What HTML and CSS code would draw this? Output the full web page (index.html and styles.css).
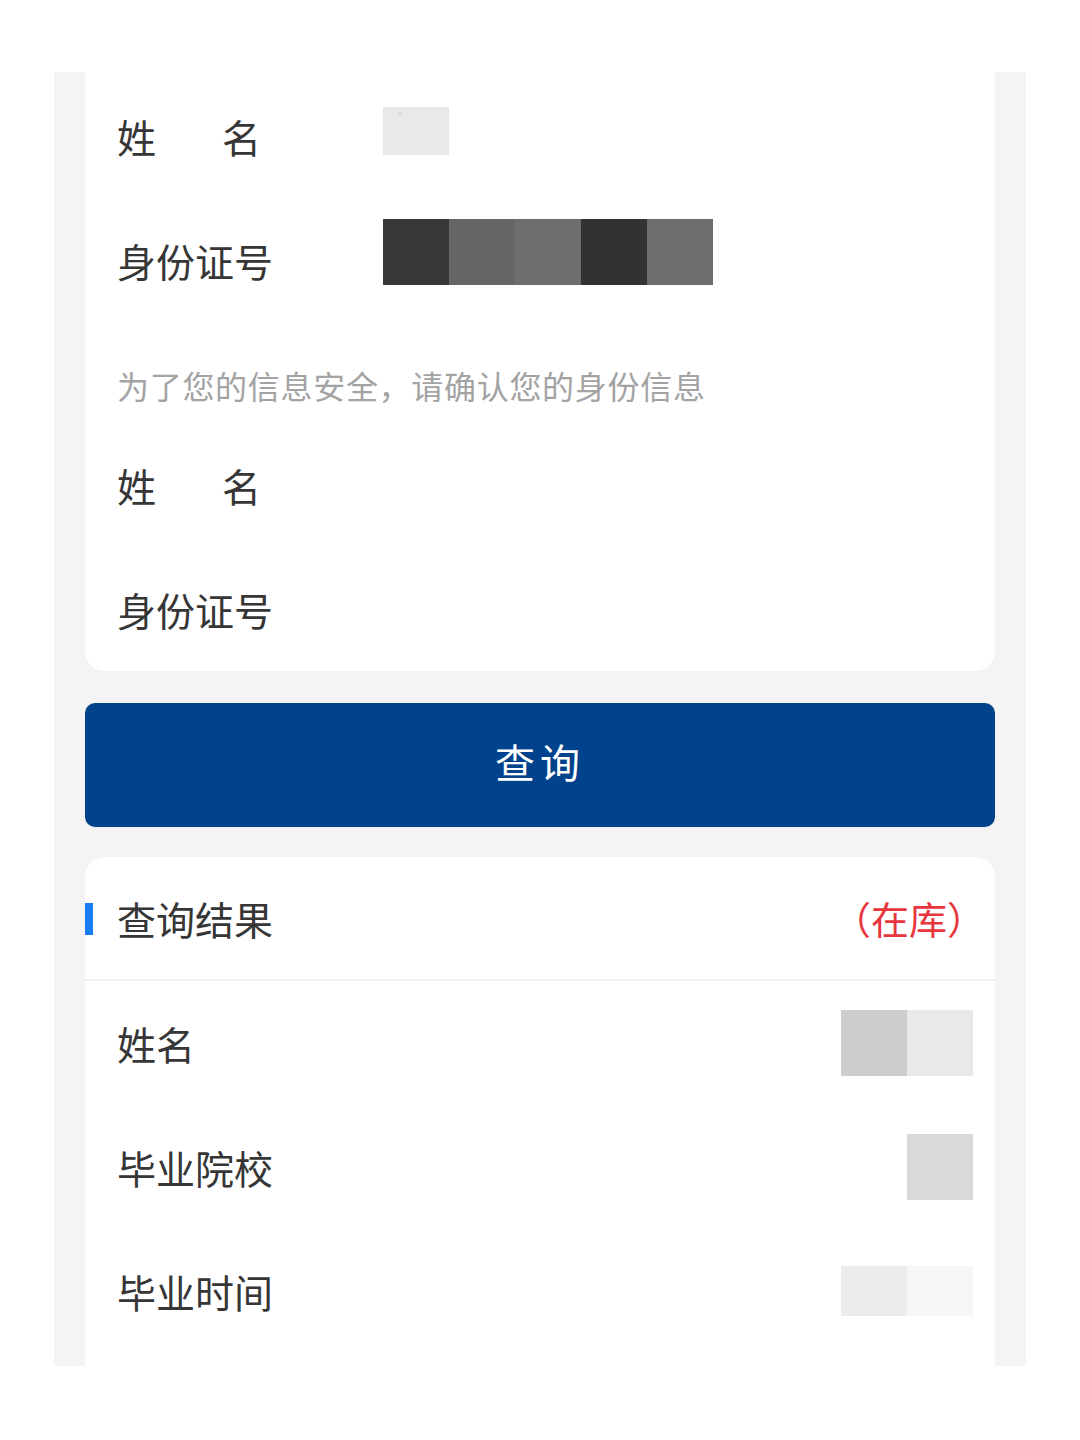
FILE: index.html
```html
<!DOCTYPE html>
<html lang="zh-CN">
<head>
<meta charset="utf-8">
<title>查询</title>
<link rel="stylesheet" href="styles.css">
</head>
<body>
<div class="panel">
  <section class="card card-form">
    <div class="row">
      <div class="label label-split"><span>姓</span><span>名</span></div>
      <div class="value"><span class="blk blk-name">·</span></div>
    </div>
    <div class="row">
      <div class="label">身份证号</div>
      <div class="value">
        <span class="blk tall c1"></span><span class="blk tall c2"></span><span class="blk tall c3"></span><span class="blk tall c4"></span><span class="blk tall c5"></span>
      </div>
    </div>
    <div class="hint">为了您的信息安全，请确认您的身份信息</div>
    <div class="row">
      <div class="label label-split"><span>姓</span><span>名</span></div>
    </div>
    <div class="row">
      <div class="label">身份证号</div>
    </div>
  </section>

  <button class="btn" type="button">查询</button>

  <section class="card card-result">
    <div class="result-head">
      <div class="title">查询结果</div>
      <div class="status">（在库）</div>
    </div>
    <div class="rrow">
      <div class="label">姓名</div>
      <div class="rvalue"><span class="blk tall g1"></span><span class="blk tall g2"></span></div>
    </div>
    <div class="rrow">
      <div class="label">毕业院校</div>
      <div class="rvalue"><span class="blk tall g3"></span></div>
    </div>
    <div class="rrow">
      <div class="label">毕业时间</div>
      <div class="rvalue"><span class="blk short g4"></span><span class="blk short g5"></span></div>
    </div>
  </section>
</div>
</body>
</html>
```
FILE: styles.css
```css
* { box-sizing: border-box; }
html, body { margin: 0; padding: 0; background: #ffffff; }
body {
  font-family: "Noto Sans CJK SC", "Noto Sans", sans-serif;
  color: #363636;
  padding: 72px 54px 74px;
}
.panel {
  background: #f4f4f4;
  height: 1294px;
  padding: 0 31px;
  overflow: hidden;
  display: flex;
  flex-direction: column;
}
.card {
  background: #ffffff;
}
.card-form {
  border-radius: 0 0 20px 20px;
  padding: 2px 0 0 32px;
}
.row {
  height: 124px;
  display: flex;
  align-items: center;
}
.label {
  font-size: 39px;
  line-height: 40px;
  width: 266px;
  flex: none;
  color: #363636;
}
.label-split {
  display: flex;
  justify-content: space-between;
  padding-right: 122px;
}
.value {
  display: flex;
  align-items: center;
}
.blk {
  display: block;
  width: 66px;
}
.blk-name {
  height: 48px;
  margin-top: -10px;
  background: #e9e9e9;
  color: #c9c9c9;
  font-size: 10px;
  line-height: 14px;
  padding-left: 12px;
}
.tall { height: 66px; }
.short { height: 50px; }
.row .value .tall { margin-top: -16px; }
.c1 { background: #383838; }
.c2 { background: #666666; }
.c3 { background: #6e6e6e; }
.c4 { background: #323232; }
.c5 { background: #6d6d6d; }
.hint {
  font-size: 32px;
  line-height: 40px;
  color: #a3a3a3;
  padding-top: 43px;
  height: 101px;
  letter-spacing: 0.7px;
}
.btn {
  margin-top: 32px;
  height: 124px;
  width: 100%;
  border: none;
  border-radius: 10px;
  background: #00428b;
  color: #ffffff;
  font-family: "Noto Sans CJK SC", "Noto Sans", sans-serif;
  font-size: 40px;
  letter-spacing: 5px;
  padding: 0 0 8px 0;
  flex: none;
}
.card-result {
  margin-top: 30px;
  border-radius: 20px 20px 0 0;
  flex: 1;
}
.result-head {
  height: 124px;
  display: flex;
  align-items: center;
  justify-content: space-between;
  padding: 0 22px 0 32px;
  border-bottom: 2px solid #f0f0f0;
  position: relative;
}
.result-head::before {
  content: "";
  position: absolute;
  left: 0;
  top: 46px;
  width: 8px;
  height: 32px;
  background: #1a7cf5;
}
.title {
  font-size: 39px;
  line-height: 40px;
  color: #363636;
}
.status {
  font-size: 38px;
  line-height: 40px;
  color: #e8363f;
  margin-right: -12px;
}
.rrow {
  height: 124px;
  display: flex;
  align-items: center;
  justify-content: space-between;
  padding: 0 22px 0 32px;
}
.rvalue {
  display: flex;
  align-items: center;
}
.g1 { background: #cdcdcd; }
.g2 { background: #e9e9e9; }
.g3 { background: #d9d9d9; }
.g4 { background: #ececec; }
.g5 { background: #f6f6f6; }
```
